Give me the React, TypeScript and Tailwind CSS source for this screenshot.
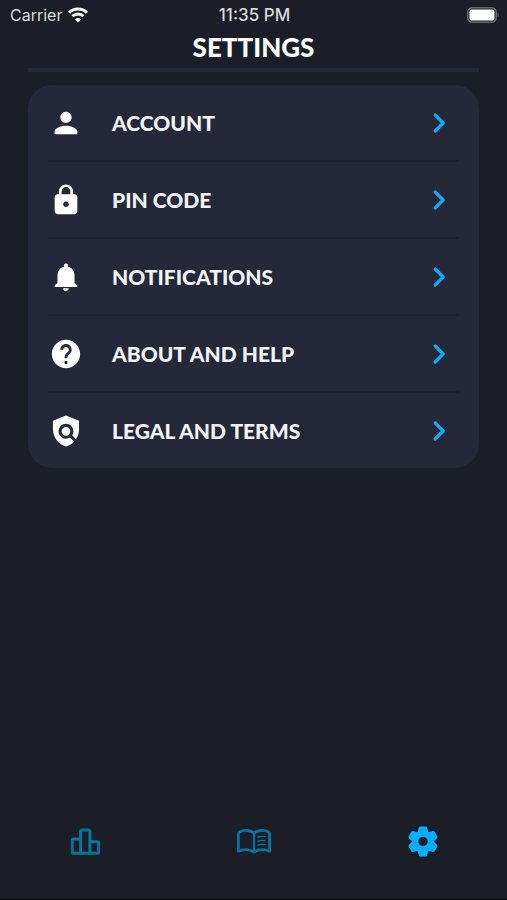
import type { ReactNode } from "react";
import { MdHelp, MdLock, MdNotifications, MdPerson } from "react-icons/md";

const rows = [
  { label: "ACCOUNT", Icon: MdPerson },
  { label: "PIN CODE", Icon: MdLock },
  { label: "NOTIFICATIONS", Icon: MdNotifications },
  { label: "ABOUT AND HELP", Icon: MdHelp },
  { label: "LEGAL AND TERMS", Icon: PolicyIcon },
];

function PolicyIcon() {
  return (
    <svg className="h-[34px] w-[34px]" viewBox="0 0 24 24" fill="none">
      <path d="M12 1 2.800 4.800V11c0 5.550 4.040 10.740 9.200 12 5.160-1.260 9.200-6.450 9.200-12V4.800z" fill="currentColor" />
      <circle cx="12" cy="12.200" r="4.200" stroke="#252838" strokeWidth="2.200" />
      <path d="m15 15.200 5 5" stroke="#252838" strokeWidth="2.200" />
    </svg>
  );
}

function StatusBar() {
  return (
    <div className="grid h-7 grid-cols-3 items-center pt-px pr-2 pl-2.5 font-['Inter',sans-serif] text-base text-[#d9dade]">
      <div className="flex items-center gap-1.5">
        <span>Carrier</span>
        <svg className="h-4 w-5" viewBox="0 0 20 16" fill="none" stroke="#fff" strokeWidth="3">
          <path d="M1 5.8a12.8 12.8 0 0 1 18 0" />
          <path d="M4.4 9.3a8 8 0 0 1 11.2 0" />
          <path d="M10 15.4 7.1 12.4a4.2 4.2 0 0 1 5.8 0z" fill="#fff" stroke="none" />
        </svg>
      </div>
      <span className="text-center text-[17px] leading-6 font-medium whitespace-nowrap">11:35 PM</span>
      <svg className="h-4 w-8 justify-self-end" viewBox="0 0 32 16" fill="none">
        <rect x="0.75" y="0.75" width="28.5" height="14.5" rx="4.5" stroke="#66686e" strokeWidth="1.5" />
        <rect x="2.5" y="2.5" width="25" height="11" rx="2.8" fill="#fff" />
        <path d="M30.5 5.5c1.4.6 1.4 4.4 0 5z" fill="#66686e" />
      </svg>
    </div>
  );
}

function SettingsRow({ label, icon }: { label: string; icon: ReactNode }) {
  return (
    <li className="border-b-2 border-[#1f212e] last:border-b-0">
      <button type="button" className="flex h-[75px] w-full items-center pt-px pl-px text-left">
        <span className="text-[34px] text-white">{icon}</span>
        <span className="ml-7 flex-1 pl-px text-[21px] leading-7 font-black text-[#f3f3fa]">{label}</span>
        <svg
          className="mr-2.5 h-6 w-5"
          viewBox="0 0 20 24"
          fill="none"
          stroke="#14a9f8"
          strokeWidth="3.2"
          strokeLinecap="round"
          strokeLinejoin="round"
        >
          <path d="M6.200 4 14.200 12l-8 8" />
        </svg>
      </button>
    </li>
  );
}

function TabBar() {
  return (
    <nav className="mb-[39px] grid h-9 grid-cols-3 text-[#06749f]">
      <button type="button" aria-label="Stats" className="flex items-center justify-center">
        <svg className="h-9 w-9" viewBox="0 0 36 36" fill="none" stroke="currentColor" strokeWidth="3" strokeLinejoin="round">
          <path d="M13.6 29.200V7.600q0-1.500 1.500-1.500h6.300q1.500 0 1.500 1.500v21.600" />
          <path d="M13.600 15H6.800q-1.500 0-1.500 1.500v11.200q0 1.500 1.500 1.500h23.400q1.500 0 1.500-1.500v-8.500q0-1.500-1.500-1.500h-7.300" />
        </svg>
      </button>
      <button type="button" aria-label="Journal" className="flex items-center justify-center">
        <svg className="h-9 w-9" viewBox="0 0 36 36" fill="none" stroke="currentColor" strokeWidth="2.8" strokeLinejoin="round" strokeLinecap="round">
          <path d="M18 9c-3.800-3.200-10.400-3.200-14.600-.9Q2.400 8.700 2.400 9.800V27.300c5-2 11-2.200 15.600.9 4.600-3.100 10.600-2.900 15.600-.9V9.800q0-1.100-1-1.700C28.400 5.800 21.800 5.800 18 9z" />
          <path d="M18 9v18.500" strokeWidth="2.200" />
          <path d="M22 13.200c2-.9 4.500-1 7-.5M22 17.200c2-.9 4.500-1 7-.5M22 21.200c2-.9 4.500-1 7-.5" strokeWidth="1.300" />
        </svg>
      </button>
      <button type="button" aria-label="Settings" className="flex items-center justify-center text-[#05adff]">
        <svg className="h-9 w-9" viewBox="-18 -17.500 36 36" fill="currentColor">
          <mask id="gear-hole">
            <rect x="-18" y="-18" width="36" height="36" fill="#fff" />
            <circle r="4.700" fill="#000" />
          </mask>
          <g mask="url(#gear-hole)">
            <circle r="10.800" />
            {[0, 60, 120, 180, 240, 300].map((deg) => (
              <path
                key={deg}
                transform={`rotate(${deg})`}
                d="M-5.600-8.500-4.200-13.800Q-3.900-15-2.700-15h5.400Q3.900-15 4.200-13.800L5.600-8.500z"
              />
            ))}
          </g>
        </svg>
      </button>
    </nav>
  );
}

export default function App() {
  return (
    <div className="flex min-h-screen flex-col border-b border-[#07080b] bg-[#1b1e26] font-['Lato',sans-serif]">
      <StatusBar />
      <main className="flex-1 px-7">
        <h1 className="box-content h-10 border-b-4 border-[#25273a] text-center text-[26px] leading-[38px] font-black text-white">
          SETTINGS
        </h1>
        <ul className="mt-[13px] rounded-3xl bg-[#252838] px-5">
          {rows.map(({ label, Icon }) => (
            <SettingsRow key={label} label={label} icon={<Icon />} />
          ))}
        </ul>
      </main>
      <TabBar />
    </div>
  );
}
